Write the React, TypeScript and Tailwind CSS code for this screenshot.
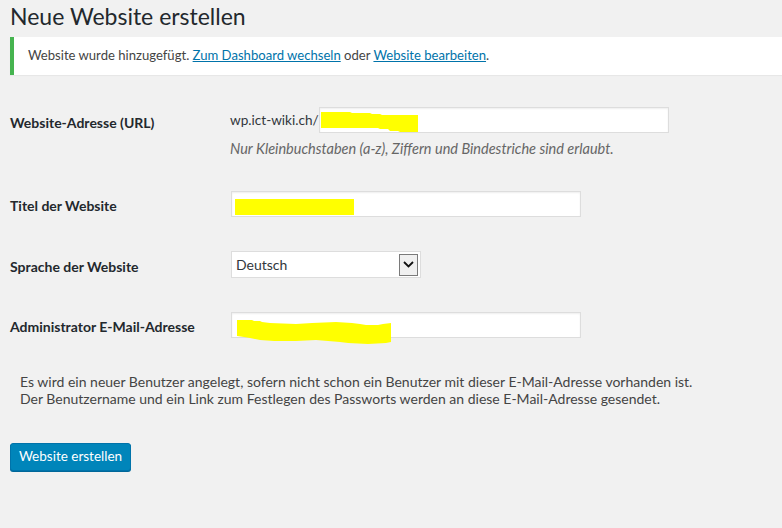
export default function App() {
  return (
    <div className="min-h-[528px] w-[782px] overflow-hidden bg-[#f1f1f1] font-['Lato','Noto_Sans',sans-serif] text-[13px] text-[#444]">
      <div className="pl-[10px]">
        <h1 className="pt-[2px] text-[23px] leading-[29px] font-normal text-[#23282d]">Neue Website erstellen</h1>

        <div className="mt-[6px] flex h-[38px] items-center border-l-4 border-[#46b450] bg-white pl-[14px] shadow-[0_1px_1px_rgba(0,0,0,0.04)]">
          <p className="text-[13.1px]">
            Website wurde hinzugefügt.{' '}
            <a href="#" className="text-[#0073aa] underline">Zum Dashboard wechseln</a> oder{' '}
            <a href="#" className="text-[#0073aa] underline">Website bearbeiten</a>.
          </p>
        </div>

        {/* Website-Adresse */}
        <div className="mt-[32px] flex items-start">
          <label className="mt-[7px] w-[220px] text-[14px] leading-[18px] font-bold text-[#23282d]">Website-Adresse (URL)</label>
          <div>
            <div className="flex items-center">
              <span className="text-[13.6px] text-[#32373c]">wp.ict-wiki.ch/</span>
              <div className="relative h-[26px] w-[350px] border border-[#ddd] bg-white shadow-[inset_0_1px_2px_rgba(0,0,0,0.07)]">
                <svg className="absolute left-0 top-[3px]" width="100" height="22" viewBox="0 0 100 22">
                  <path d="M1 1 L30 1 L32 2 L50 2 L52 3 L60 3 L62 4 L98 4 L98 21 L80 21 L78 20 L70 20 L68 18 L60 18 L58 17 L1 17 Z" fill="#ffff00" />
                </svg>
              </div>
            </div>
            <p className="mt-[7px] text-[14.5px] leading-[18px] italic text-[#666]">
              Nur Kleinbuchstaben (a-z), Ziffern und Bindestriche sind erlaubt.
            </p>
          </div>
        </div>

        {/* Titel */}
        <div className="mt-[33px] flex items-start">
          <label className="mt-[6px] w-[221px] text-[14px] leading-[18px] font-bold text-[#23282d]">Titel der Website</label>
          <div className="relative h-[26px] w-[350px] border border-[#ddd] bg-white shadow-[inset_0_1px_2px_rgba(0,0,0,0.07)]">
            <div className="absolute left-[3px] top-[7px] h-[16px] w-[119px] bg-[#ffff00]" />
          </div>
        </div>

        {/* Sprache */}
        <div className="mt-[34px] flex items-start">
          <label className="mt-[7px] w-[221px] text-[14px] leading-[18px] font-bold text-[#23282d]">Sprache der Website</label>
          <div className="flex h-[27px] w-[190px] items-center justify-between border border-[#ddd] bg-white pl-[4px] pr-[2px] text-[14px] text-[#32373c]">
            <span>Deutsch</span>
            <span className="flex h-[22px] w-[19px] items-center justify-center border border-[#7a7a7a] bg-[#f0f0f0]">
              <svg width="11" height="7" viewBox="0 0 11 7">
                <path d="M1 1 L5.5 5.5 L10 1" fill="none" stroke="#111" strokeWidth="1.8" />
              </svg>
            </span>
          </div>
        </div>

        {/* E-Mail */}
        <div className="mt-[34px] flex items-start">
          <label className="mt-[6px] w-[221px] text-[14px] leading-[18px] font-bold text-[#23282d]">Administrator E-Mail-Adresse</label>
          <div className="relative h-[26px] w-[350px] border border-[#ddd] bg-white shadow-[inset_0_1px_2px_rgba(0,0,0,0.07)]">
            <svg className="absolute left-[4px] top-[6px]" width="158" height="26" viewBox="0 0 158 26">
              <path d="M1 1 L16 1 L18 2 L24 2 L26 3 L34 4 L60 5 L76 4 L100 3 L116 4 L124 5 L130 6 L142 6 L147 5 L155 4 L155 23 L150 24 L132 25 L112 24 L104 23 L80 21 L60 22 L38 22 L24 21 L14 19 L8 18 L1 17 Z" fill="#ffff00" />
            </svg>
          </div>
        </div>

        <div className="pl-[10px]">
          <p className="mt-[35px] text-[14px] leading-[17px] text-[#444]">
            Es wird ein neuer Benutzer angelegt, sofern nicht schon ein Benutzer mit dieser E-Mail-Adresse vorhanden ist.
            <br />
            Der Benutzername und ein Link zum Festlegen des Passworts werden an diese E-Mail-Adresse gesendet.
          </p>
        </div>

        <button className="mt-[36px] flex h-[28px] w-[121px] items-center justify-center rounded-[3px] border border-[#0073aa] bg-[#0085ba] pb-[1px] text-[13.5px] text-white shadow-[0_1px_0_#006799]">
          Website erstellen
        </button>
      </div>
    </div>
  );
}
